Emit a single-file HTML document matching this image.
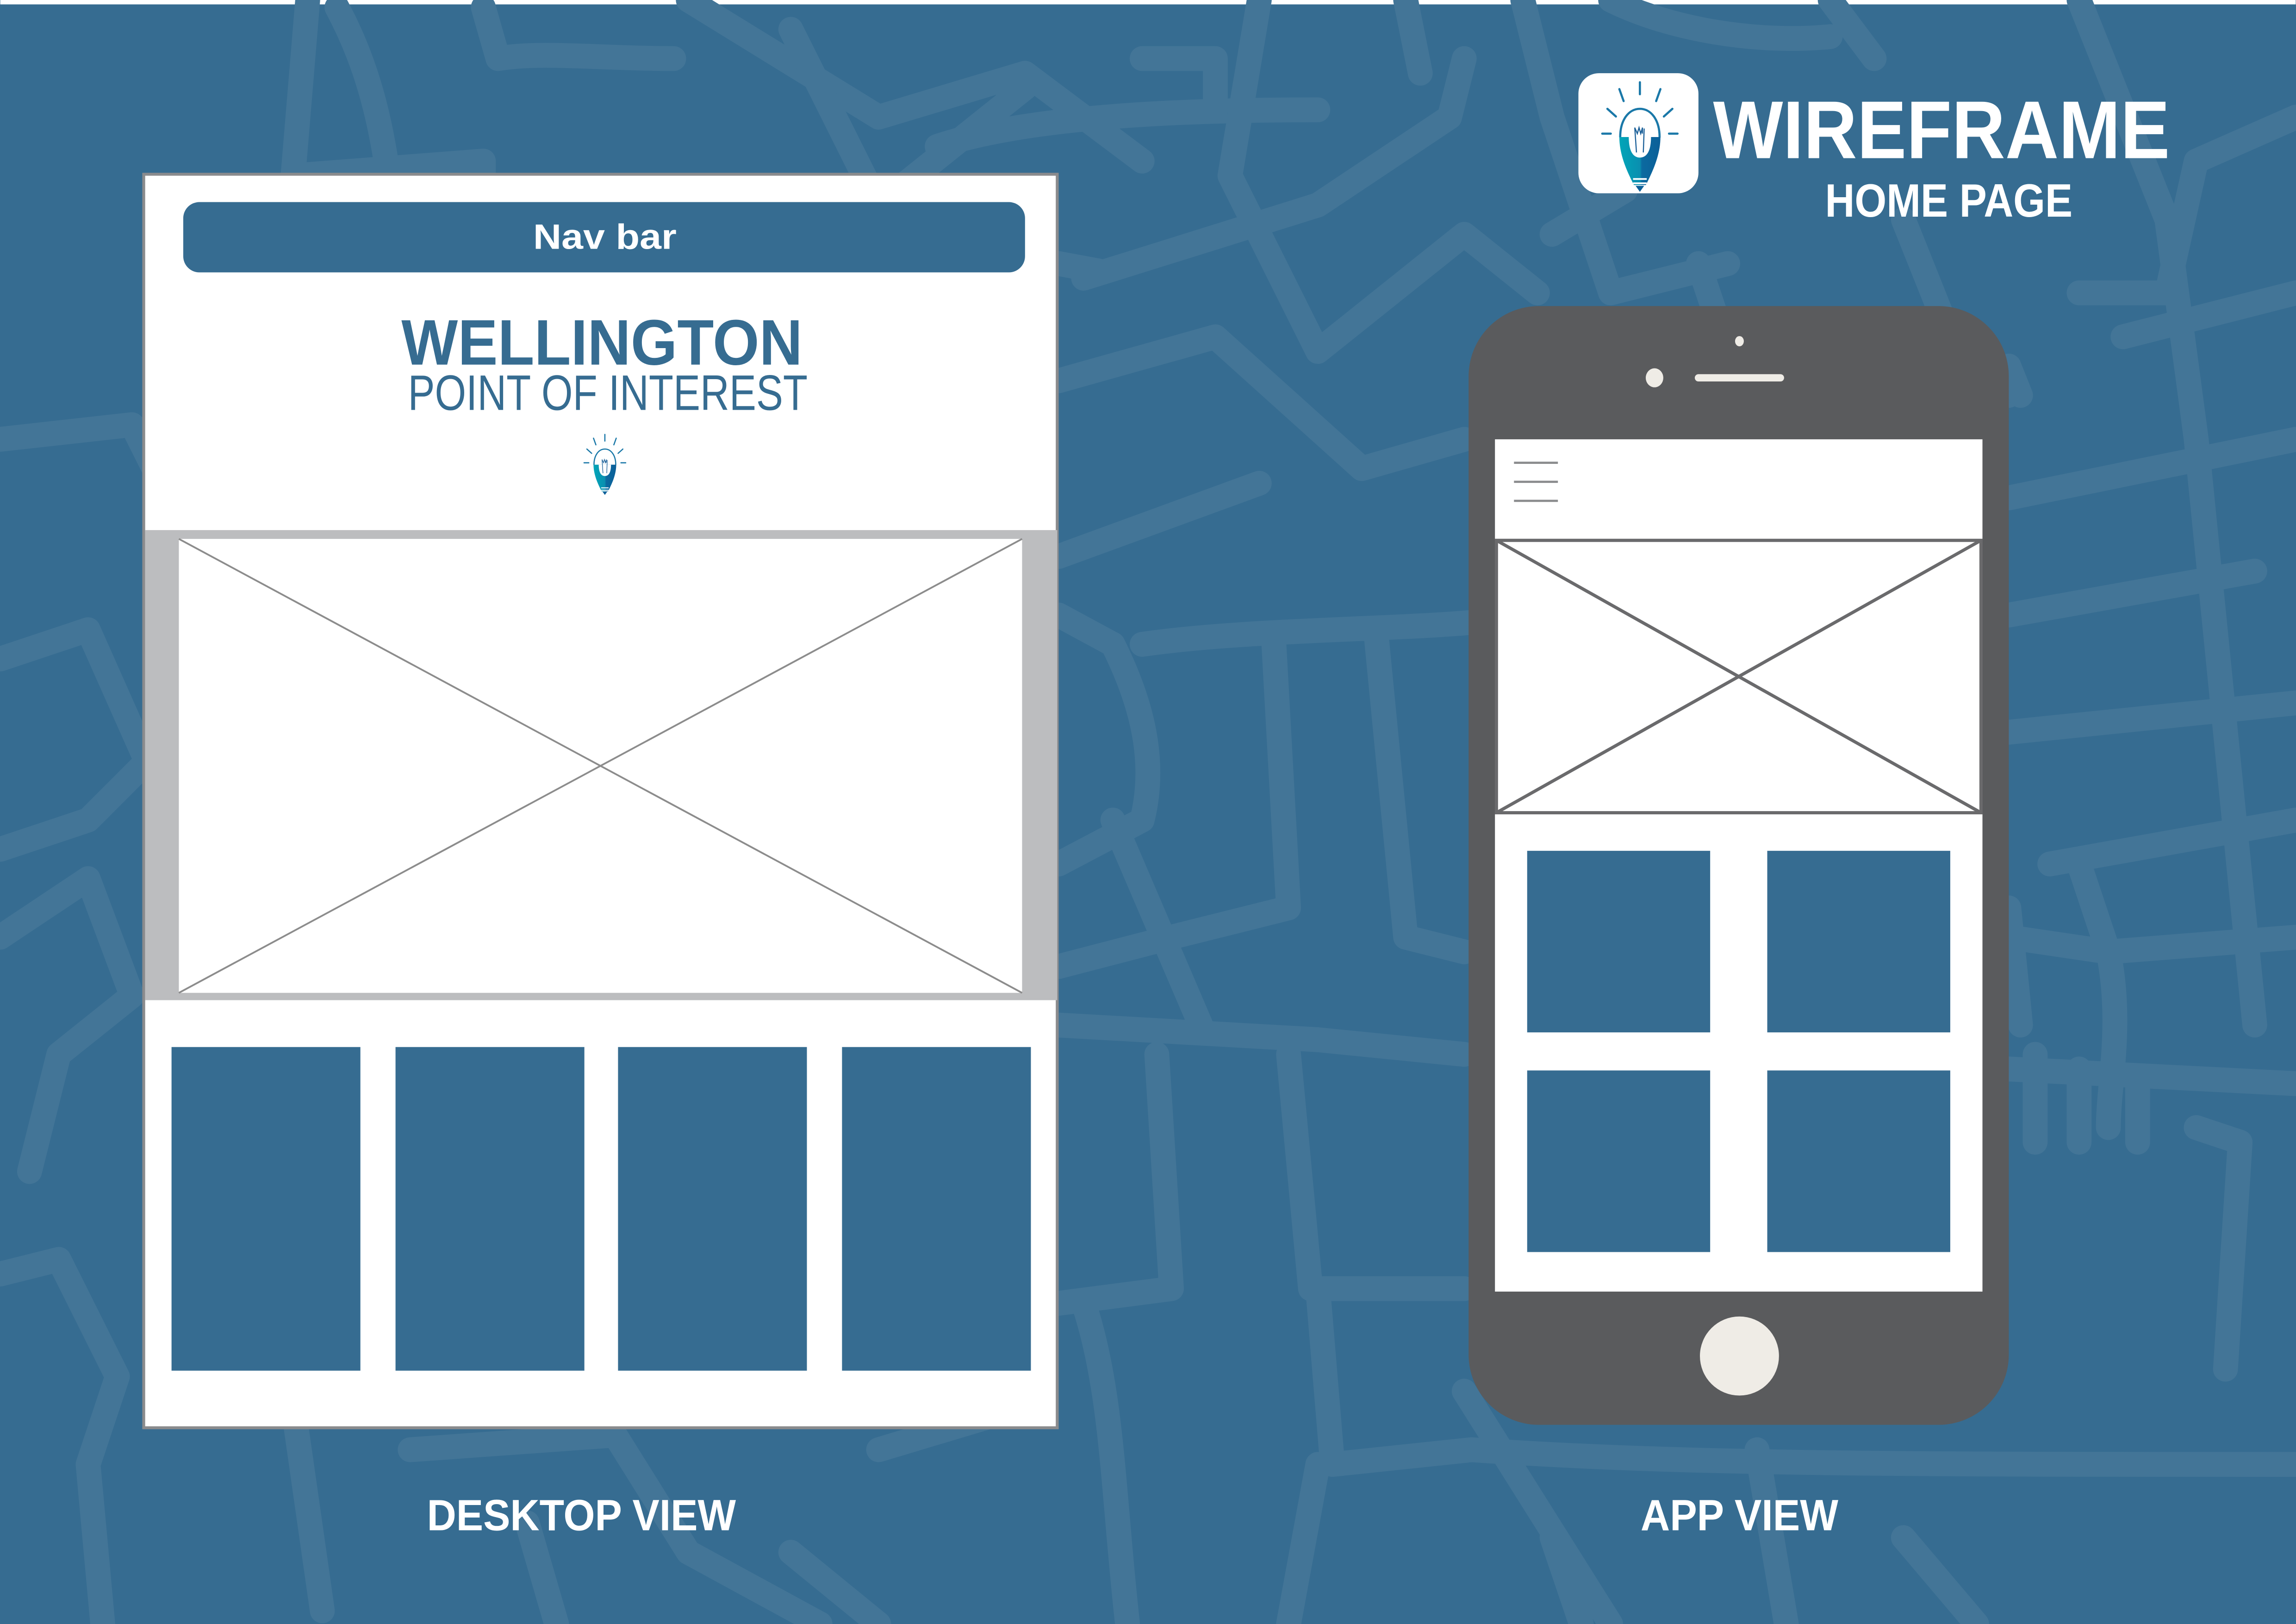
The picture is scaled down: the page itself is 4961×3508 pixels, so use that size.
<!DOCTYPE html>
<html><head><meta charset="utf-8"><style>
html,body{margin:0;padding:0;background:#366c91;}
svg{display:block}
text{font-family:"Liberation Sans",sans-serif}
</style></head><body>
<svg width="4961" height="3508" viewBox="0 0 1568 1109" xmlns="http://www.w3.org/2000/svg">
<defs>
<linearGradient id="g" x1="0" x2="1" y1="0" y2="0">
<stop offset="0" stop-color="#00a6b8"/><stop offset="0.5" stop-color="#0a8fb0"/><stop offset="0.55" stop-color="#0b6aa0"/><stop offset="1" stop-color="#0b5f98"/></linearGradient>
<symbol id="bulb" viewBox="0 0 100 130">
<g stroke="#1a78a8" stroke-width="2.5" stroke-linecap="round" fill="none">
<line x1="50" y1="2" x2="50" y2="16"/>
<line x1="26" y1="10" x2="31" y2="24"/><line x1="74" y1="10" x2="69" y2="24"/>
<line x1="12" y1="33" x2="22" y2="42"/><line x1="88" y1="33" x2="78" y2="42"/>
<line x1="6" y1="62" x2="16" y2="62"/><line x1="84" y1="62" x2="94" y2="62"/>
<path d="M27,66 C27,46 37,33 50,33 C63,33 73,46 73,66" stroke-width="2.5"/>
</g>
<path d="M26,66 L74,66 C74,88 64,108 57,122 L43,122 C36,108 26,88 26,66 Z" fill="url(#g)"/>
<path d="M37,66 C37,84 43,90 50,90 C57,90 63,84 63,66 Z" fill="#fff"/>
<path d="M46,84 L44,55 L47,62 L49,55 L51,62 L53,55 L53,62 M54,84 L55,56" stroke="#1a5f98" stroke-width="1.3" fill="none"/>
<rect x="42" y="114" width="16" height="2" fill="#fff"/>
<rect x="42" y="119" width="16" height="2" fill="#fff"/>
<path d="M45,123 L55,123 L50,130 Z" fill="#0b5f98"/>
</symbol>
</defs>
<rect width="1568" height="1109" fill="#366c91"/>
<rect width="1568" height="3" fill="#ffffff"/>
<g stroke="#437597" stroke-width="17" fill="none" stroke-linecap="round" stroke-linejoin="round">
<path d="M230,5 C265,70 275,150 270,300"/>
<path d="M330,5 L340,40 C370,35 410,40 460,40"/>
<path d="M210,0 L200,120 L330,110 L330,180"/>
<path d="M0,300 L90,290 L130,370 L200,380"/>
<path d="M0,450 L60,430 L100,520 L60,560 L0,580"/>
<path d="M0,640 L60,600 L90,680 L40,720 L20,800"/>
<path d="M0,870 L40,860 L80,940 L60,1000 L70,1109"/>
<path d="M200,960 L220,1100"/>
<path d="M280,990 L420,980 L470,1060 L560,1109"/>
<path d="M380,1109 L360,1040"/>
<path d="M470,0 L600,80 L700,50 L780,110"/>
<path d="M540,20 L600,140 L700,60"/>
<path d="M640,100 C700,80 800,75 900,75"/>
<path d="M780,40 L830,40 L830,75"/>
<path d="M740,190 L900,140 L990,80 L1000,40"/>
<path d="M860,0 L840,120 L900,240 L1000,160 L1050,200"/>
<path d="M960,0 L970,50"/>
<path d="M723,260 L830,230 L930,320 L1000,300"/>
<path d="M723,380 L860,330"/>
<path d="M723,420 L760,440 C780,480 790,520 780,560 L723,590"/>
<path d="M780,440 C850,430 950,430 1005,425"/>
<path d="M870,440 L880,620 L800,640 L723,660"/>
<path d="M940,435 L960,640 L1000,650"/>
<path d="M723,700 L900,710 L1000,720"/>
<path d="M790,720 L800,880 L723,890"/>
<path d="M880,720 L895,880 L1000,880"/>
<path d="M760,560 L820,700"/>
<path d="M740,890 C760,950 760,1020 770,1109"/>
<path d="M900,880 L910,1000 L1005,990"/>
<path d="M1005,990 C1150,1000 1300,1000 1568,1000"/>
<path d="M900,1000 L880,1109"/>
<path d="M1000,950 L1100,1109"/>
<path d="M1200,990 L1220,1109"/>
<path d="M1040,0 L1060,80 L1100,200 L1180,180"/>
<path d="M1100,0 C1140,20 1200,30 1250,25"/>
<path d="M1160,180 L1200,300 L1372,270"/>
<path d="M1372,340 L1568,300"/>
<path d="M1372,420 L1540,390"/>
<path d="M1372,500 L1568,480"/>
<path d="M1372,640 L1440,650 L1568,640"/>
<path d="M1372,730 L1568,740"/>
<path d="M1372,620 L1380,700"/>
<path d="M1420,590 L1440,650 C1450,700 1440,740 1440,770"/>
<path d="M1500,770 L1530,780 L1520,935"/>
<path d="M1390,720 L1390,780 M1420,730 L1420,780 M1460,740 L1460,780"/>
<path d="M1420,0 L1480,150 L1500,300 L1520,500 L1540,700"/>
<path d="M1568,80 L1500,110 L1480,200 L1420,200"/>
<path d="M1450,230 L1568,200"/>
<path d="M1372,250 L1380,270"/>
<path d="M1110,130 L1060,160"/>
<path d="M723,180 L750,185"/>
<path d="M1250,0 L1280,40"/>
<path d="M1300,150 L1340,250"/>
<path d="M1568,560 L1400,590"/>
<path d="M1300,1050 L1350,1109"/>
<path d="M1060,1050 L1080,1109"/>
<path d="M600,990 L700,960"/>
<path d="M540,1060 L600,1109"/>
</g>

<!-- Desktop -->
<rect x="98" y="119" width="624" height="856" fill="#fff" stroke="#8a8b8d" stroke-width="2"/>
<rect x="125" y="138" width="575" height="48" rx="11" fill="#366c91"/>
<text x="413" y="170" text-anchor="middle" font-size="24" font-weight="bold" fill="#fff" textLength="98" lengthAdjust="spacingAndGlyphs">Nav bar</text>
<text x="411" y="249" text-anchor="middle" font-size="44" font-weight="bold" fill="#366c91" textLength="274" lengthAdjust="spacingAndGlyphs">WELLINGTON</text>
<text x="415" y="280" text-anchor="middle" font-size="34" fill="#366c91" textLength="273" lengthAdjust="spacingAndGlyphs">POINT OF INTEREST</text>
<use href="#bulb" x="394" y="296" width="38" height="42"/>
<rect x="99" y="362" width="623" height="321" fill="#bcbdbf"/>
<rect x="122" y="368" width="576" height="310" fill="#fff"/>
<path d="M122,368 L698,678 M698,368 L122,678" stroke="#8c8c8c" stroke-width="1.2"/>
<rect x="117" y="715" width="129" height="221" fill="#366c91"/>
<rect x="270" y="715" width="129" height="221" fill="#366c91"/>
<rect x="422" y="715" width="129" height="221" fill="#366c91"/>
<rect x="575" y="715" width="129" height="221" fill="#366c91"/>

<!-- Phone -->
<rect x="1003" y="209" width="369" height="764" rx="48" fill="#5a5b5d"/>
<rect x="1021" y="300" width="333" height="582" fill="#fff"/>
<g stroke="#8a8b8d" stroke-width="1.5"><line x1="1034" y1="316" x2="1064" y2="316"/><line x1="1034" y1="329" x2="1064" y2="329"/><line x1="1034" y1="342" x2="1064" y2="342"/></g>
<rect x="1022" y="369" width="331" height="186" fill="#fff" stroke="#6a6a6c" stroke-width="2.2"/>
<path d="M1022,369 L1353,555 M1353,369 L1022,555" stroke="#6a6a6c" stroke-width="2.2"/>
<rect x="1043" y="581" width="125" height="124" fill="#366c91"/>
<rect x="1207" y="581" width="125" height="124" fill="#366c91"/>
<rect x="1043" y="731" width="125" height="124" fill="#366c91"/>
<rect x="1207" y="731" width="125" height="124" fill="#366c91"/>
<circle cx="1188" cy="926" r="27" fill="#efece6"/>
<ellipse cx="1130" cy="258" rx="6" ry="6.5" fill="#efece6"/>
<line x1="1160" y1="258" x2="1216" y2="258" stroke="#efece6" stroke-width="5" stroke-linecap="round"/>
<ellipse cx="1188" cy="233" rx="3" ry="3.5" fill="#efece6"/>

<!-- Title -->
<rect x="1078" y="50" width="82" height="82" rx="14" fill="#fff"/>
<use href="#bulb" x="1090" y="55" width="60" height="76"/>
<text x="1326" y="108" text-anchor="middle" font-size="56" font-weight="bold" fill="#fff" textLength="312" lengthAdjust="spacingAndGlyphs">WIREFRAME</text>
<text x="1331" y="148" text-anchor="middle" font-size="32" font-weight="bold" fill="#fff" textLength="169" lengthAdjust="spacingAndGlyphs">HOME PAGE</text>

<text x="397" y="1045" text-anchor="middle" font-size="30" font-weight="bold" fill="#fff" textLength="211" lengthAdjust="spacingAndGlyphs">DESKTOP VIEW</text>
<text x="1188" y="1045" text-anchor="middle" font-size="30" font-weight="bold" fill="#fff" textLength="135" lengthAdjust="spacingAndGlyphs">APP VIEW</text>
</svg>
</body></html>
